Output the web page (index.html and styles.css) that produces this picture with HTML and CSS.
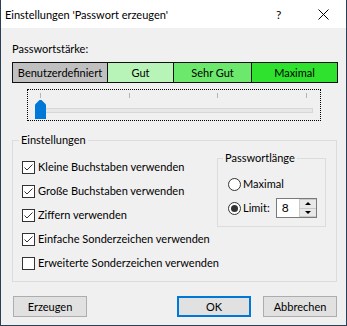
FILE: index.html
```html
<!DOCTYPE html>
<html lang="de">
<head>
  <meta charset="UTF-8" />
  <title>Einstellungen 'Passwort erzeugen'</title>
  <link rel="stylesheet" href="styles.css">
</head>
<body>
  <div class="window">
    <div class="titlebar">
      <span class="title">Einstellungen 'Passwort erzeugen'</span>
      <span class="help">?</span>
      <svg class="close" width="11" height="11" viewBox="0 0 11 11">
        <path d="M0.5 0.5 10.5 10.5 M10.5 0.5 0.5 10.5" stroke="#000" fill="none" />
      </svg>
    </div>

    <div class="content">
      <div class="label">Passwortstärke:</div>

      <div class="strength">
        <div class="level custom">Benutzerdefiniert</div>
        <div class="level good">Gut</div>
        <div class="level very-good">Sehr Gut</div>
        <div class="level max">Maximal</div>
      </div>

      <div class="slider">
        <div class="ticks"><i></i><i></i><i></i><i></i></div>
        <div class="track"></div>
        <svg class="thumb" width="11" height="19" viewBox="0 0 11 19">
          <path d="M0 4.5 4.5 0H6.5L11 4.5V19H0Z" fill="#0078d7" />
        </svg>
      </div>

      <fieldset class="group">
        <legend>Einstellungen</legend>
        <div class="group-body">
          <div class="split">
            <div class="checks">
              <label class="check">
                <svg width="13" height="13" viewBox="0 0 13 13"><rect x="0.5" y="0.5" width="12" height="12" fill="#fff" stroke="#333" /><path d="M2.5 6.5 5 9 10.5 3.5" fill="none" stroke="#333" /></svg>
                Kleine Buchstaben verwenden
              </label>
              <label class="check">
                <svg width="13" height="13" viewBox="0 0 13 13"><rect x="0.5" y="0.5" width="12" height="12" fill="#fff" stroke="#333" /><path d="M2.5 6.5 5 9 10.5 3.5" fill="none" stroke="#333" /></svg>
                Große Buchstaben verwenden
              </label>
              <label class="check">
                <svg width="13" height="13" viewBox="0 0 13 13"><rect x="0.5" y="0.5" width="12" height="12" fill="#fff" stroke="#333" /><path d="M2.5 6.5 5 9 10.5 3.5" fill="none" stroke="#333" /></svg>
                Ziffern verwenden
              </label>
            </div>

            <fieldset class="group length">
              <legend>Passwortlänge</legend>
              <div class="length-body">
                <label class="radio"><span class="dot"></span>Maximal</label>
                <div class="limit-row">
                  <label class="radio"><span class="dot on"></span>Limit:</label>
                  <span class="spin">
                    <span class="spin-value">8</span>
                    <span class="spin-buttons"><span class="up"></span><span class="down"></span></span>
                  </span>
                </div>
              </div>
            </fieldset>
          </div>

          <label class="check">
            <svg width="13" height="13" viewBox="0 0 13 13"><rect x="0.5" y="0.5" width="12" height="12" fill="#fff" stroke="#333" /><path d="M2.5 6.5 5 9 10.5 3.5" fill="none" stroke="#333" /></svg>
            Einfache Sonderzeichen verwenden
          </label>
          <label class="check">
            <svg width="13" height="13" viewBox="0 0 13 13"><rect x="0.5" y="0.5" width="12" height="12" fill="#fff" stroke="#333" /></svg>
            Erweiterte Sonderzeichen verwenden
          </label>
        </div>
      </fieldset>

      <div class="buttons">
        <button class="btn generate">Erzeugen</button>
        <button class="btn default">OK</button>
        <button class="btn">Abbrechen</button>
      </div>
    </div>
  </div>
</body>
</html>
```

FILE: styles.css
```css
* {
  box-sizing: border-box;
}
body {
  margin: 0;
  font-family: Lato, "Liberation Sans", sans-serif;
  font-size: 11px;
  line-height: 16px;
  color: #000;
}
.window {
  width: 347px;
  height: 326px;
  background: #f0f0f0;
  border: 1px solid #2b3f55;
  border-top: 0;
}
.titlebar {
  height: 28px;
  background: #fff;
  display: flex;
  align-items: center;
  padding: 1px 0 0 4px;
}
.title {
  flex: 1;
}
.help {
  width: 6px;
  margin-right: 36px;
  font-size: 12px;
}
.close {
  margin-right: 17px;
}
.content {
  padding: 13px 0 0 11px;
}

/* strength bar */
.strength {
  display: flex;
  width: 326px;
  height: 21px;
  margin-top: 5px;
  border: 1px solid #111;
}
.level {
  text-align: center;
  line-height: 19px;
  border-left: 1px solid #111;
}
.custom {
  width: 94px;
  border-left: 0;
  background: #c0c0c0;
}
.good {
  width: 66px;
  background: #b8f4b8;
}
.very-good {
  width: 78px;
  background: #6ce86c;
}
.max {
  width: 86px;
  background: #2ee22e;
}

/* slider */
.slider {
  position: relative;
  width: 294px;
  height: 32px;
  margin: 6px 0 0 15px;
  border: 1px dotted #000;
}
.ticks {
  display: flex;
  justify-content: space-between;
  margin: 3px 13px 0 12px;
}
.ticks i {
  width: 1px;
  height: 5px;
  background: #b4b4b4;
}
.track {
  height: 5px;
  margin: 10px 7px 0 7px;
  border: 1px solid #d6d6d6;
  background: #e7e7e7;
}
.thumb {
  position: absolute;
  left: 7px;
  top: 10px;
}

/* group boxes */
.group {
  margin: 11px 0 0 0;
  padding: 0;
  width: 325px;
  min-width: 0;
  border: 1px solid #dcdcdc;
}
.group legend {
  margin-left: 6px;
  padding: 0 2px;
  line-height: 16px;
}
.group-body {
  padding: 2px 10px 6px 9px;
}
.split {
  display: flex;
  justify-content: space-between;
  align-items: flex-start;
}
.checks {
  padding-top: 5px;
}
.check {
  display: flex;
  align-items: center;
  gap: 3px;
  height: 24px;
  white-space: nowrap;
}
.length {
  width: 109px;
  margin: 0;
}
.length legend {
  margin-left: 5px;
}
.length-body {
  padding: 6px 0 6px 10px;
}
.radio {
  display: flex;
  align-items: center;
  gap: 2px;
  height: 24px;
}
.dot {
  width: 13px;
  height: 13px;
  border: 1px solid #333;
  border-radius: 50%;
  background: #fff;
  padding: 2px;
}
.dot.on::after {
  content: "";
  display: block;
  width: 7px;
  height: 7px;
  border-radius: 50%;
  background: #333;
}
.limit-row {
  display: flex;
  align-items: center;
  gap: 6px;
}
.spin {
  display: flex;
  width: 41px;
  height: 20px;
  border: 1px solid #7a7a7a;
  background: #fff;
}
.spin-value {
  flex: 1;
  padding-left: 5px;
  line-height: 18px;
  font-size: 12px;
}
.spin-buttons {
  display: flex;
  flex-direction: column;
  width: 17px;
  border: 1px solid #c9c9c9;
  border-right: 0;
}
.spin-buttons span {
  flex: 1;
  background: #e8e8e8;
  display: flex;
  align-items: center;
  justify-content: center;
}
.spin-buttons .up {
  border-bottom: 1px solid #c9c9c9;
}
.up::after {
  content: "";
  border: 3px solid transparent;
  border-top: 0;
  border-bottom: 3px solid #000;
}
.down::after {
  content: "";
  border: 3px solid transparent;
  border-bottom: 0;
  border-top: 3px solid #000;
}

/* buttons */
.buttons {
  display: flex;
  gap: 12px;
  width: 325px;
  margin-top: 14px;
}
.btn {
  width: 74px;
  height: 21px;
  padding: 0;
  font: inherit;
  color: #000;
  background: #e1e1e1;
  border: 1px solid #adadad;
}
.generate {
  margin: 0 auto 0 1px;
}
.btn.default {
  border: 2px solid #0078d7;
}
```
